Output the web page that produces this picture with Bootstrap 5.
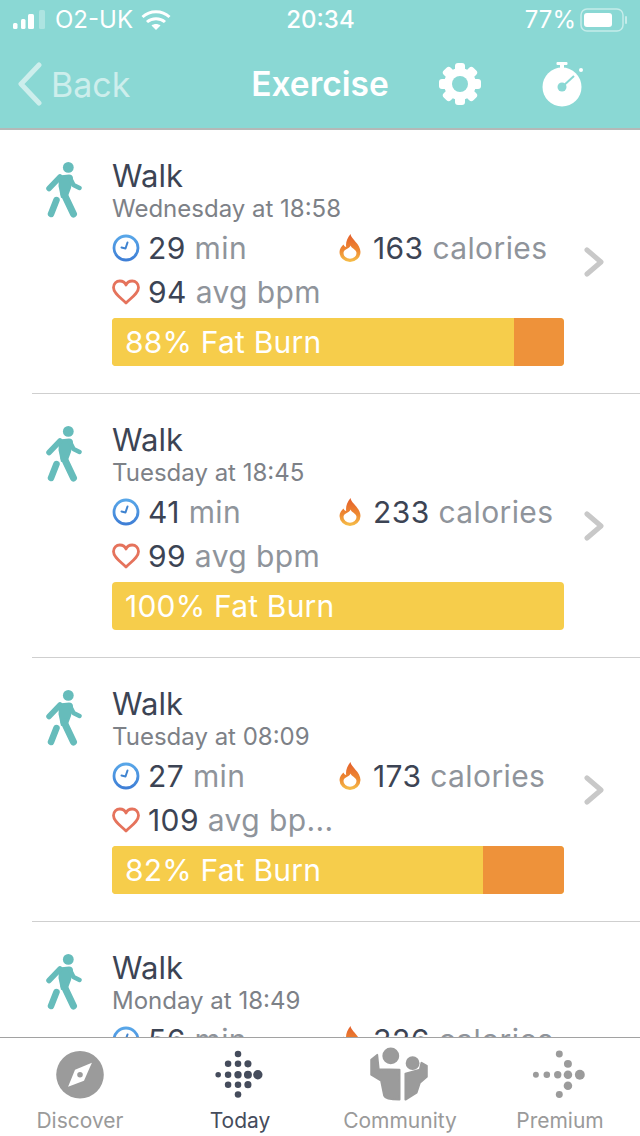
<!DOCTYPE html>
<html lang="en">
<head>
  <meta charset="utf-8">
  <meta name="viewport" content="width=device-width, initial-scale=1">
  <title>Exercise</title>
  <link href="https://cdn.jsdelivr.net/npm/bootstrap@5.3.2/dist/css/bootstrap.min.css" rel="stylesheet">
  <style>
    html, body { height: 1136px; overflow: hidden; }
    body { font-family: Inter, "Liberation Sans", sans-serif; color: #3c4454; background: #fff; }
    .app-shell { height: 1136px; }
    .top-head { background: #8ad8d4; height: 130px; border-bottom: 2px solid #b4b9b8; color: #fff; flex: none; }
    .status-line { height: 40px; font-size: 24px; padding: 0 12px 0 13px; }
    .status-side { width: 240px; }
    .nav-line { height: 88px; }
    .nav-left { width: 220px; padding-left: 17px; color: #cdeeec; font-size: 34px; }
    .nav-title { width: 200px; font-size: 33.5px; font-weight: 600; text-align: center; white-space: nowrap; }
    .activity-list { margin-left: 32px; }
    .activity-row { border: 0; border-bottom: 1px solid #cfcfcf; border-radius: 0 !important; padding: 0; height: 264px; color: inherit; }
    .walker { width: 36px; height: 56px; margin: 32px 30px 0 14px; flex: none; }
    .row-body { width: 452px; padding-top: 28px; flex: none; }
    .walk-name { font-size: 31px; line-height: 36px; }
    .walk-date { font-size: 24px; line-height: 30px; color: #7d8187; margin-bottom: 2px; }
    .stat-line { height: 44px; font-size: 30px; letter-spacing: .4px; }
    .stat-cell { width: 228px; white-space: nowrap; }
    .stat-ico { width: 28px; height: 28px; margin-right: 8px; flex: none; }
    .flame-ico { width: 22px; height: 28px; margin: 0 12px 0 1px; flex: none; }
    .unit { color: #8f949b; }
    .zone-bar { height: 48px; border-radius: 4px; background: #f6cd4b; margin-top: 4px; font-size: 30px; letter-spacing: .2px; }
    .zone-fat { background: #f6cd4b; color: #fff; text-align: left; padding-left: 13px; white-space: nowrap; overflow: visible; }
    .zone-cardio { background: #ee923a; }
    .row-chevron { width: 20px; height: 30px; margin-left: 20px; flex: none; }
    .tab-strip { height: 99px; border-top: 1px solid #a2a2a2; background: #fff; flex: none; }
    .tab-item { width: 160px; color: #9a9a9a; font-size: 21px; padding-top: 7px; }
    .tab-item svg { width: 70px; height: 60px; display: block; }
    .tab-item.is-on { color: #454c5c; }
  </style>
</head>
<body>
  <svg width="0" height="0" class="position-absolute">
    <defs>
      <linearGradient id="flameGrad" x1="0" y1="0" x2="0" y2="1">
        <stop offset="0" stop-color="#e45f2b"/>
        <stop offset="0.6" stop-color="#ee8a32"/>
        <stop offset="1" stop-color="#f6c04a"/>
      </linearGradient>
      <linearGradient id="clockGrad" x1="0" y1="0" x2="0" y2="1">
        <stop offset="0" stop-color="#58a6e8"/>
        <stop offset="1" stop-color="#3f7fd6"/>
      </linearGradient>
      <symbol id="i-walker" viewBox="0 0 36 56">
        <path d="M13 13.500 L23 12.500 C25.500 12.500 27 14 27 16.500 L25 26 L22 34 L15 36 L12.500 24 Z" fill="#66bcbb"/>
        <g fill="none" stroke="#66bcbb" stroke-linecap="round" stroke-linejoin="round">
          <path d="M14 15 L3 26.500" stroke-width="5.500"/>
          <path d="M24 16 L27.500 23 L33.500 26" stroke-width="4.500"/>
          <path d="M18 32 L27.500 52" stroke-width="7"/>
          <path d="M10.500 38 L5 52" stroke-width="6.500"/>
        </g>
        <circle cx="22.300" cy="5.400" r="5.400" fill="#66bcbb"/>
      </symbol>
      <symbol id="i-clock" viewBox="0 0 28 28">
        <circle cx="14" cy="14" r="12" fill="none" stroke="url(#clockGrad)" stroke-width="2.800"/>
        <path d="M15.500 8.500 L13.500 14.500 L9.500 13.500" fill="none" stroke="#3f83d0" stroke-width="2" stroke-linecap="round" stroke-linejoin="round"/>
      </symbol>
      <symbol id="i-heart" viewBox="0 0 28 28">
        <path d="M14 25 C9 20 1.500 15.500 1.500 9.500 C1.500 5.500 4.500 3 7.800 3 C10.500 3 13 4.500 14 7 C15 4.500 17.500 3 20.200 3 C23.500 3 26.500 5.500 26.500 9.500 C26.500 15.500 19 20 14 25 Z" fill="none" stroke="#e5735c" stroke-width="2.800" stroke-linejoin="round"/>
      </symbol>
      <symbol id="i-flame" viewBox="0 0 22 28">
        <path fill-rule="evenodd" fill="url(#flameGrad)" d="M11.500 0 C12 5 21.500 10 21.500 18 A10.500 10 0 0 1 0.500 18 C0.500 14.500 2.500 12.500 4.500 10.500 C5 12 6 12.800 7.200 13 C6.500 9 8 4 11.500 0 Z M11.500 11.500 C11 14.500 4.500 15 4.500 19 A6.500 5.800 0 0 0 17.500 19 C17.500 15.500 12.500 14.500 11.500 11.500 Z"/>
      </symbol>
      <symbol id="i-chevron" viewBox="0 0 20 30">
        <path d="M3 3 L17 15 L3 27" fill="none" stroke="#c8c8c8" stroke-width="5" stroke-linecap="round" stroke-linejoin="round"/>
      </symbol>
    </defs>
  </svg>

  <div class="app-shell d-flex flex-column">
    <header class="top-head">
      <div class="status-line d-flex align-items-center justify-content-between">
        <div class="status-side d-flex align-items-center">
          <svg width="34" height="22" viewBox="0 0 34 22" class="me-2" fill="#fff">
            <rect x="0" y="14" width="4.500" height="6" rx="1.500"/>
            <rect x="8" y="10" width="4.500" height="10" rx="1.500"/>
            <rect x="15" y="5" width="6" height="15" rx="1.500"/>
            <rect x="26" y="1" width="6" height="19" rx="1.500" opacity=".3"/>
          </svg>
          <span class="me-2">O2-UK</span>
          <svg width="30" height="22" viewBox="0 0 30 22" fill="none" stroke="#fff" stroke-width="3">
            <path d="M1.500 8 C9 1 21 1 28.500 8"/>
            <path d="M6 13 C11 8.500 19 8.500 24 13"/>
            <path d="M15 21 L10.500 16.500 C13 14.500 17 14.500 19.500 16.500 Z" fill="#fff" stroke="none"/>
          </svg>
        </div>
        <span class="fw-medium">20:34</span>
        <div class="status-side d-flex align-items-center justify-content-end">
          <span class="me-1">77%</span>
          <svg width="48" height="24" viewBox="0 0 48 24">
            <rect x="1" y="1" width="42" height="22" rx="6" fill="none" stroke="#fff" stroke-opacity=".5" stroke-width="1.500"/>
            <rect x="4" y="5" width="28" height="14" rx="3" fill="#fff"/>
            <rect x="45" y="8" width="2" height="8" rx="1" fill="#fff" fill-opacity=".5"/>
          </svg>
        </div>
      </div>
      <nav class="nav-line d-flex align-items-center">
        <div class="nav-left d-flex align-items-center">
          <svg width="26" height="44" viewBox="0 0 26 44" class="me-2 flex-none" fill="none" stroke="#cdeeec" stroke-width="5" stroke-linecap="round" stroke-linejoin="round">
            <path d="M22 3 L4 22 L22 41"/>
          </svg>
          <span>Back</span>
        </div>
        <div class="nav-title">Exercise</div>
        <div class="d-flex align-items-center">
          <svg width="44" height="44" viewBox="0 0 44 44" class="gear-ico" style="margin-left:18px">
            <g fill="#fff">
              <circle cx="22" cy="22" r="16"/>
              <rect x="17" y="1" width="10" height="42" rx="3"/>
              <rect x="17" y="1" width="10" height="42" rx="3" transform="rotate(45 22 22)"/>
              <rect x="17" y="1" width="10" height="42" rx="3" transform="rotate(90 22 22)"/>
              <rect x="17" y="1" width="10" height="42" rx="3" transform="rotate(135 22 22)"/>
            </g>
            <circle cx="22" cy="22" r="8" fill="#8ad8d4"/>
          </svg>
          <svg width="48" height="62" viewBox="0 0 48 62" style="margin-left:58px;margin-bottom:6px">
            <g fill="#fff">
              <circle cx="22" cy="37" r="19.500"/>
              <rect x="16.500" y="12" width="11" height="3" rx="1"/>
              <rect x="20" y="14" width="4" height="6"/>
              <circle cx="41" cy="20" r="2"/>
            </g>
            <path d="M22 37 L34 26" stroke="#8ad8d4" stroke-width="2" fill="none"/>
            <circle cx="22" cy="37" r="4.500" fill="#8ad8d4"/>
          </svg>
        </div>
      </nav>
    </header>

    <main class="flex-grow-1 overflow-hidden">
      <div class="list-group list-group-flush activity-list">

        <div class="list-group-item activity-row d-flex align-items-start">
          <svg class="walker"><use href="#i-walker"/></svg>
          <div class="row-body">
            <div class="walk-name">Walk</div>
            <div class="walk-date">Wednesday at 18:58</div>
            <div class="stat-line d-flex align-items-center">
              <div class="stat-cell d-flex align-items-center"><svg class="stat-ico"><use href="#i-clock"/></svg><span>29 <span class="unit">min</span></span></div>
              <div class="stat-cell d-flex align-items-center"><svg class="flame-ico"><use href="#i-flame"/></svg><span>163 <span class="unit">calories</span></span></div>
            </div>
            <div class="stat-line d-flex align-items-center">
              <div class="stat-cell d-flex align-items-center"><svg class="stat-ico"><use href="#i-heart"/></svg><span>94 <span class="unit">avg bpm</span></span></div>
            </div>
            <div class="progress zone-bar">
              <div class="progress-bar zone-fat" style="width: 89%">88% Fat Burn</div>
              <div class="progress-bar zone-cardio" style="width: 11%"></div>
            </div>
          </div>
          <svg class="row-chevron align-self-center"><use href="#i-chevron"/></svg>
        </div>

        <div class="list-group-item activity-row d-flex align-items-start">
          <svg class="walker"><use href="#i-walker"/></svg>
          <div class="row-body">
            <div class="walk-name">Walk</div>
            <div class="walk-date">Tuesday at 18:45</div>
            <div class="stat-line d-flex align-items-center">
              <div class="stat-cell d-flex align-items-center"><svg class="stat-ico"><use href="#i-clock"/></svg><span>41 <span class="unit">min</span></span></div>
              <div class="stat-cell d-flex align-items-center"><svg class="flame-ico"><use href="#i-flame"/></svg><span>233 <span class="unit">calories</span></span></div>
            </div>
            <div class="stat-line d-flex align-items-center">
              <div class="stat-cell d-flex align-items-center"><svg class="stat-ico"><use href="#i-heart"/></svg><span>99 <span class="unit">avg bpm</span></span></div>
            </div>
            <div class="progress zone-bar">
              <div class="progress-bar zone-fat" style="width: 100%">100% Fat Burn</div>
            </div>
          </div>
          <svg class="row-chevron align-self-center"><use href="#i-chevron"/></svg>
        </div>

        <div class="list-group-item activity-row d-flex align-items-start">
          <svg class="walker"><use href="#i-walker"/></svg>
          <div class="row-body">
            <div class="walk-name">Walk</div>
            <div class="walk-date">Tuesday at 08:09</div>
            <div class="stat-line d-flex align-items-center">
              <div class="stat-cell d-flex align-items-center"><svg class="stat-ico"><use href="#i-clock"/></svg><span>27 <span class="unit">min</span></span></div>
              <div class="stat-cell d-flex align-items-center"><svg class="flame-ico"><use href="#i-flame"/></svg><span>173 <span class="unit">calories</span></span></div>
            </div>
            <div class="stat-line d-flex align-items-center">
              <div class="stat-cell d-flex align-items-center"><svg class="stat-ico"><use href="#i-heart"/></svg><span>109 <span class="unit">avg bp...</span></span></div>
            </div>
            <div class="progress zone-bar">
              <div class="progress-bar zone-fat" style="width: 82%">82% Fat Burn</div>
              <div class="progress-bar zone-cardio" style="width: 18%"></div>
            </div>
          </div>
          <svg class="row-chevron align-self-center"><use href="#i-chevron"/></svg>
        </div>

        <div class="list-group-item activity-row d-flex align-items-start">
          <svg class="walker"><use href="#i-walker"/></svg>
          <div class="row-body">
            <div class="walk-name">Walk</div>
            <div class="walk-date">Monday at 18:49</div>
            <div class="stat-line d-flex align-items-center">
              <div class="stat-cell d-flex align-items-center"><svg class="stat-ico"><use href="#i-clock"/></svg><span>56 <span class="unit">min</span></span></div>
              <div class="stat-cell d-flex align-items-center"><svg class="flame-ico"><use href="#i-flame"/></svg><span>326 <span class="unit">calories</span></span></div>
            </div>
          </div>
        </div>

      </div>
    </main>

    <footer class="tab-strip d-flex">
      <div class="tab-item d-flex flex-column align-items-center">
        <svg viewBox="45 1045 70 60">
          <circle cx="80" cy="1075" r="24" fill="#9b9b9b"/>
          <path d="M92 1063 L84 1081 L68 1087 L75 1070 Z" fill="#fff"/>
          <circle cx="80" cy="1075" r="2.800" fill="#9b9b9b"/>
        </svg>
        <span>Discover</span>
      </div>
      <div class="tab-item is-on d-flex flex-column align-items-center">
        <svg viewBox="205 1045 70 60" fill="#454c5c">
          <circle cx="238" cy="1054" r="3.300"/>
          <circle cx="228" cy="1064" r="3.300"/><circle cx="238" cy="1064" r="3.300"/><circle cx="248" cy="1064" r="3.600"/>
          <circle cx="218" cy="1075" r="2.800"/><circle cx="228" cy="1075" r="3.300"/><circle cx="238" cy="1075" r="3.700"/><circle cx="248" cy="1075" r="4"/><circle cx="258" cy="1075" r="4.700"/>
          <circle cx="228" cy="1085" r="3.300"/><circle cx="238" cy="1085" r="3.300"/><circle cx="248" cy="1085" r="3.600"/>
          <circle cx="238" cy="1095" r="3.300"/>
        </svg>
        <span>Today</span>
      </div>
      <div class="tab-item d-flex flex-column align-items-center">
        <svg viewBox="365 1045 70 60" fill="#9b9b9b" stroke="#9b9b9b" stroke-width="2" stroke-linejoin="round">
          <circle cx="390.700" cy="1056" r="7.500"/>
          <circle cx="412.700" cy="1063.300" r="6"/>
          <path d="M371 1060 L377 1055 L378.500 1069.500 L399.500 1070 L399.500 1100 C392 1100 385 1099 384 1096 L381 1081 L371 1075 Z"/>
          <path d="M405.500 1074 L420 1070 L421.700 1063 L427 1066 L427 1077 L420 1083 L416.700 1093 L405.500 1100 Z"/>
        </svg>
        <span>Community</span>
      </div>
      <div class="tab-item d-flex flex-column align-items-center">
        <svg viewBox="525 1045 70 60" fill="#9b9b9b">
          <circle cx="559.300" cy="1054" r="3.500"/>
          <circle cx="568" cy="1064" r="4"/>
          <circle cx="535.700" cy="1075" r="3"/><circle cx="546.700" cy="1075" r="3.300"/><circle cx="557.700" cy="1075" r="3.700"/><circle cx="568" cy="1075" r="4.300"/><circle cx="580" cy="1075" r="5"/>
          <circle cx="568" cy="1086" r="4.300"/>
          <circle cx="559.300" cy="1095" r="3.500"/>
        </svg>
        <span>Premium</span>
      </div>
    </footer>
  </div>

  <script src="https://cdn.jsdelivr.net/npm/bootstrap@5.3.2/dist/js/bootstrap.bundle.min.js"></script>
</body>
</html>
